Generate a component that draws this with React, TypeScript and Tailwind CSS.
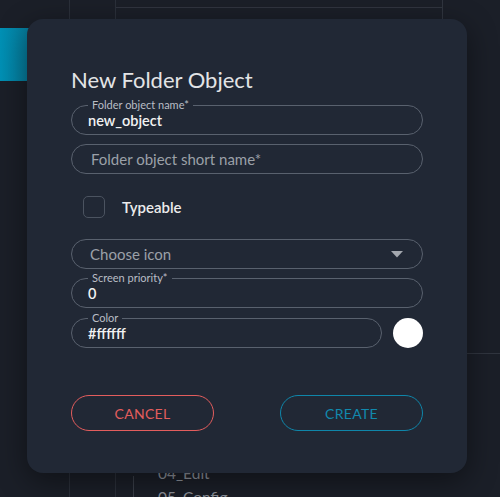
import React from "react";

const font = { fontFamily: "Lato, 'Noto Sans', sans-serif" };

function Field({ label, value, placeholder, className = "" }: { label?: string; value?: string; placeholder?: string; className?: string }) {
  return (
    <div className={`relative h-[30px] rounded-full border border-[#59616e] flex items-center ${className}`}>
      {label && (
        <span className="absolute left-[16px] top-[-8px] px-[4px] bg-[#212835] text-[11px] leading-[14px] text-[#b9bdc5]">
          {label}
        </span>
      )}
      {value !== undefined ? (
        <span className="pl-[16px] pt-[2px] text-[14.5px] font-semibold text-[#f2f2f2] leading-none">{value}</span>
      ) : (
        <span className="pl-[19px] text-[15px] text-[#9ba0a8] leading-none">{placeholder}</span>
      )}
    </div>
  );
}

export default function App() {
  return (
    <div className="relative w-[500px] h-[497px] overflow-hidden bg-[#1b1f28]" style={font}>
      {/* background page */}
      <div className="flex h-full">
        <div className="w-[70px] h-full shrink-0 border-r border-[#2b303a] flex flex-col">
          <div className="mt-[28px] h-[53px] w-[70px] bg-gradient-to-r from-[#0091b6] to-[#0a5f78]" />
        </div>
        <div className="w-[46px] h-full shrink-0 border-r border-[#2b303a]" />
        <div className="flex-1 flex flex-col min-h-0">
          <div className="h-[8px] shrink-0 w-[327px] border-b border-r border-[#30353f]" />
          <div className="w-[327px] h-[345px] shrink-0 border-r border-[#30353f]" />
          <div className="flex-1 min-h-0 border-t border-[#30353f] flex">
            <div className="ml-[17px] w-[1px] mt-[122px] bg-[#3a3f49]" />
            <div className="pt-[107px] pl-[24px] text-[15.5px] text-[#8d929b] leading-[24px]">
              <div>04_Edit</div>
              <div>05_Config</div>
            </div>
          </div>
        </div>
      </div>

      {/* dialog */}
      <div className="absolute left-[27px] top-[19px] w-[440px] h-[454px] rounded-[16px] bg-[#212835] shadow-[0_8px_30px_rgba(0,0,0,0.45)] px-[44px] pt-[47px] flex flex-col">
        <h2 className="text-[22px] leading-[28px] text-[#e3e4e6]">New Folder Object</h2>
        <Field className="mt-[11px]" label="Folder object name*" value="new_object" />
        <Field className="mt-[9px]" placeholder="Folder object short name*" />
        <div className="mt-[22px] h-[22px] flex items-center">
          <div className="ml-[12px] w-[22px] h-[22px] rounded-[5px] border border-[#4b5360]" />
          <span className="ml-[17px] text-[15px] font-semibold text-[#ececec]">Typeable</span>
        </div>
        <div className="mt-[21px] h-[30px] rounded-full border border-[#59616e] flex items-center justify-between pl-[18px] pr-[19px]">
          <span className="text-[15px] text-[#9ba0a8] leading-none">Choose icon</span>
          <svg width="12" height="7" viewBox="0 0 12 7">
            <path d="M0 0 L12 0 L6 6.5 Z" fill="#a3a7ae" />
          </svg>
        </div>
        <Field className="mt-[9px]" label="Screen priority*" value="0" />
        <div className="mt-[10px] flex items-center">
          <Field className="flex-1" label="Color" value="#ffffff" />
          <div className="ml-[11px] w-[30px] h-[30px] rounded-full bg-white" />
        </div>
        <div className="mt-[47px] flex justify-between">
          <button className="w-[143px] h-[36px] rounded-full border border-[#e35d5d] text-[#e35d5d] text-[14px] tracking-[0.3px]">
            CANCEL
          </button>
          <button className="w-[143px] h-[36px] rounded-full border border-[#0f86aa] text-[#1189ad] text-[14px] tracking-[0.3px]">
            CREATE
          </button>
        </div>
      </div>
    </div>
  );
}
